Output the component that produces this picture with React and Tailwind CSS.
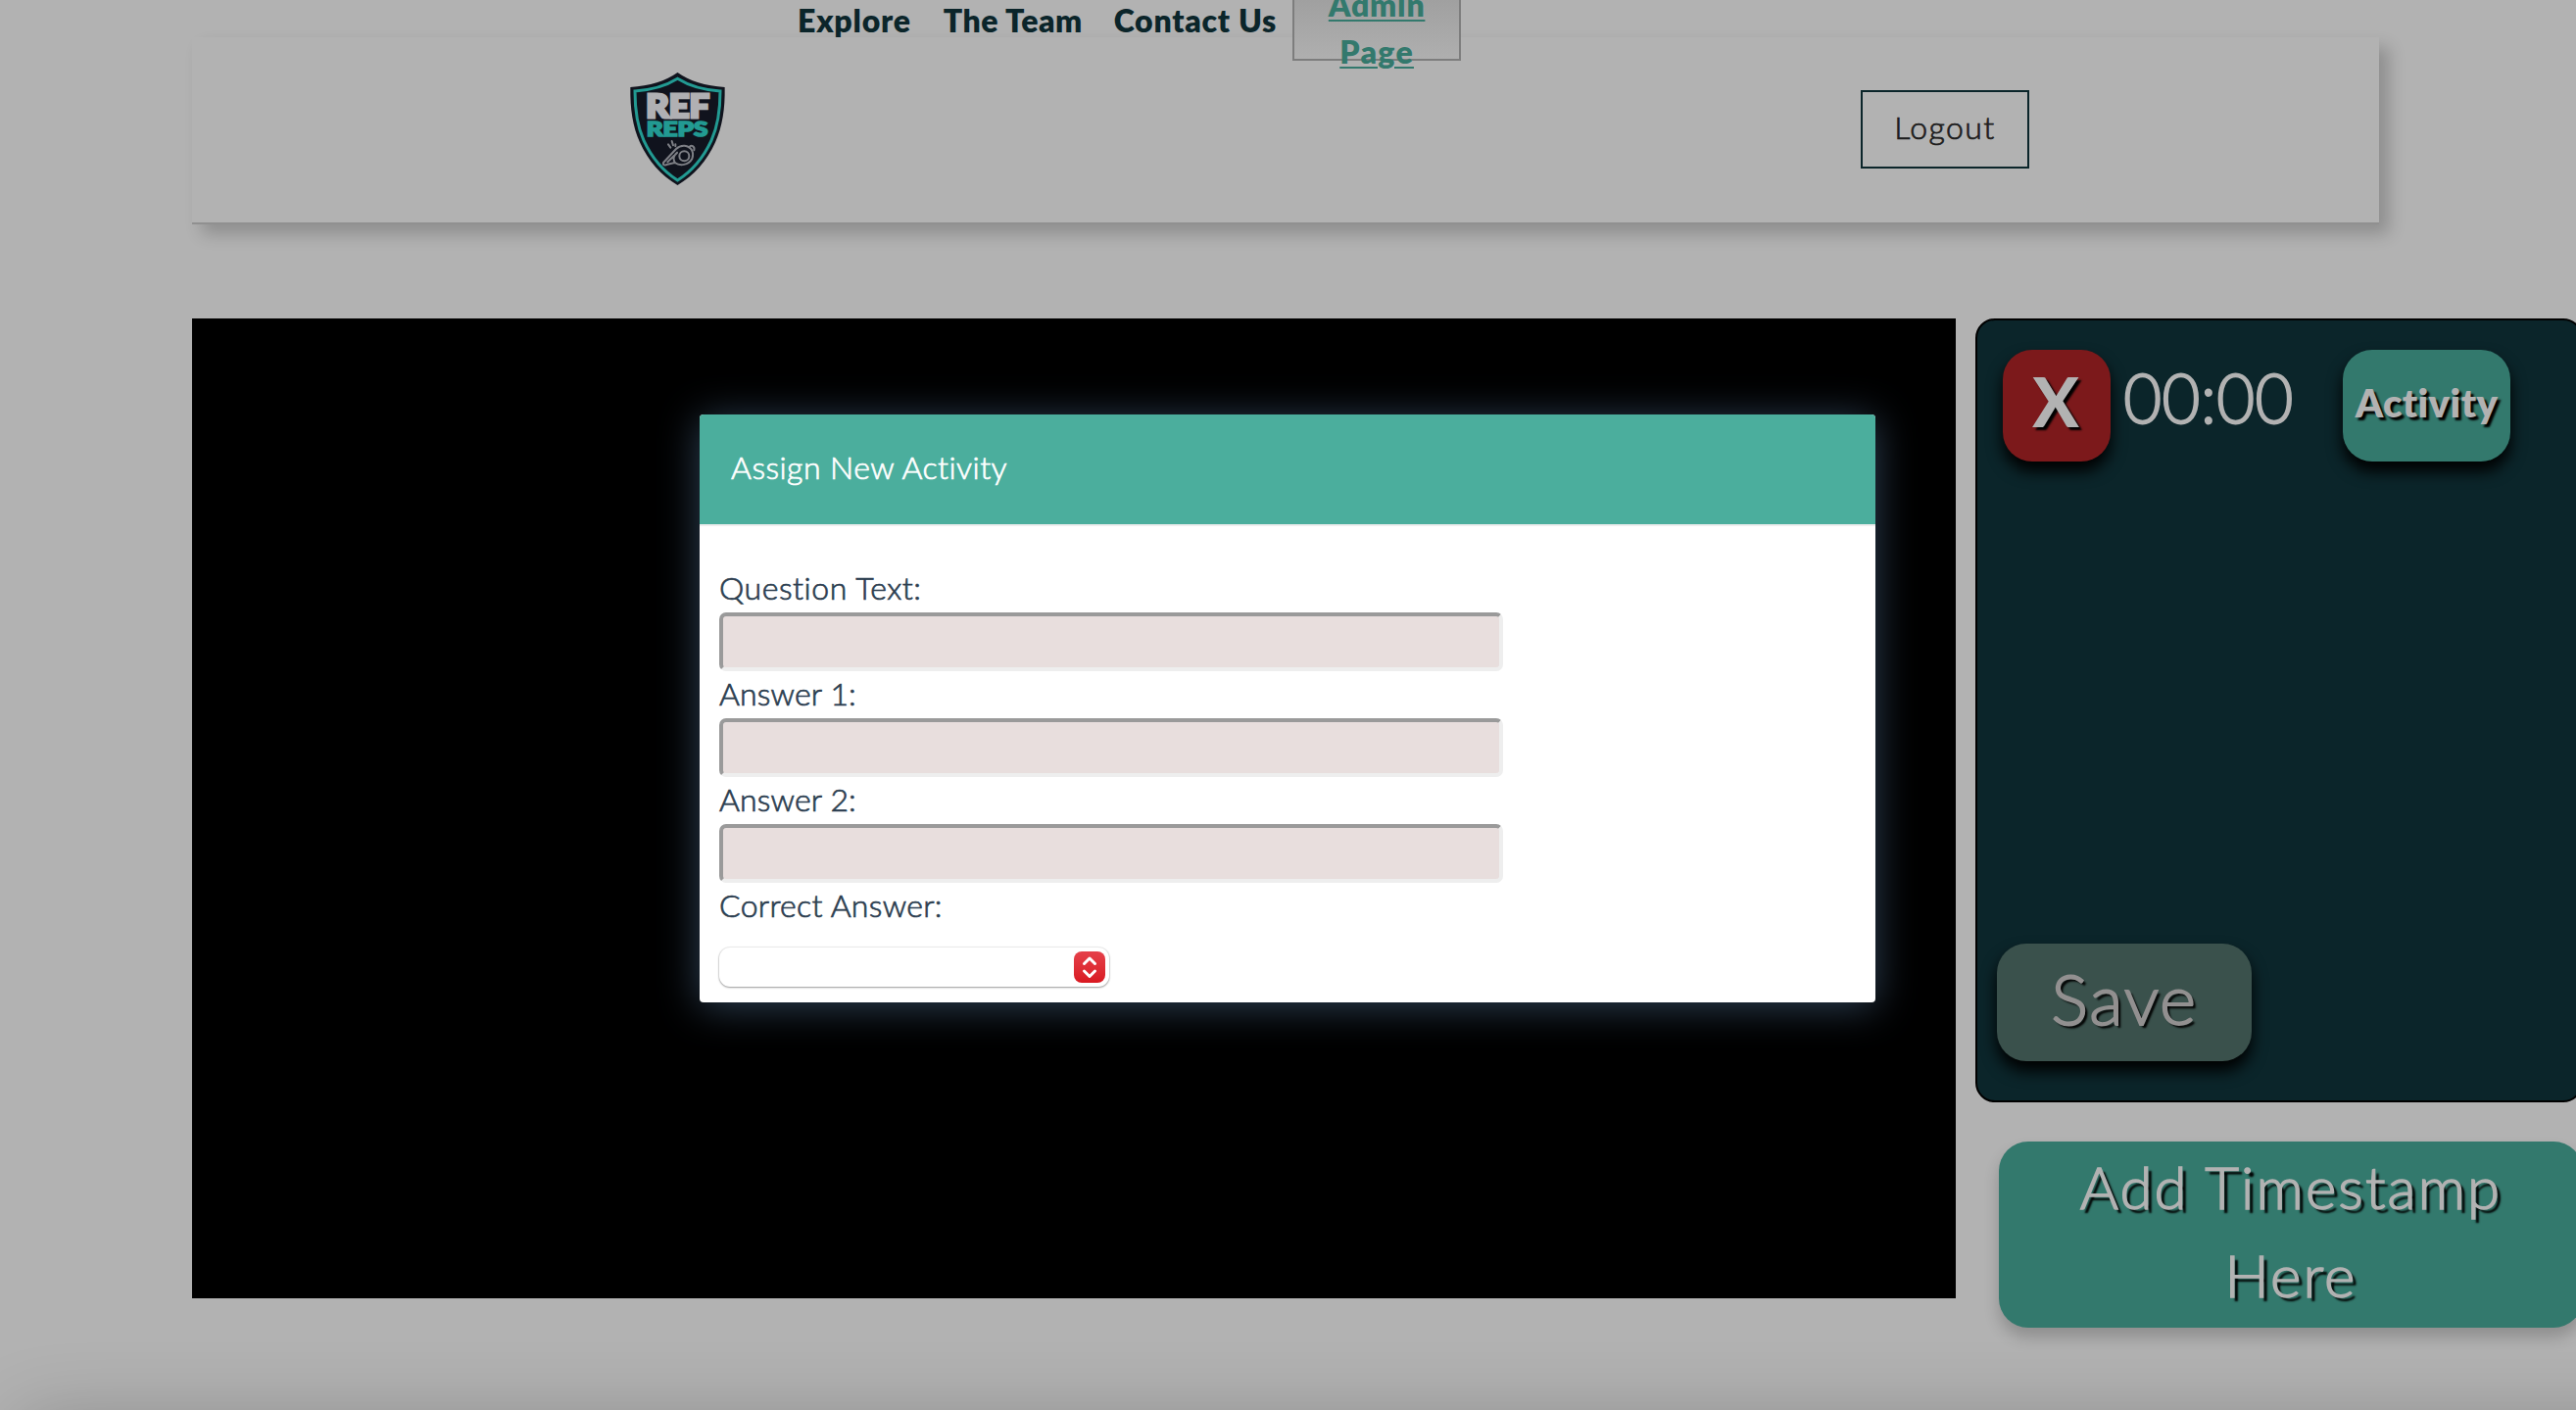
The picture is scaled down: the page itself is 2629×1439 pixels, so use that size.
function Logo() {
  return (
    <svg viewBox="60 49 309 360" className="h-[120px] w-[103px]" fontFamily="Lato, sans-serif">
      <path
        d="M214.500 58 C250 84 300 99 359 103 C360 170 352 222 330 272 C304 330 264 374 214.500 403 C165 374 125 330 99 272 C77 222 69 170 70 103 C129 99 179 84 214.500 58 Z"
        fill="#10131d"
      />
      <path
        d="M214.500 77 C250 99 296 112 345 115 C345 172 339 220 318 266 C294 318 258 360 214.500 388 C171 360 135 318 111 266 C90 220 84 172 84 115 C133 112 179 99 214.500 77 Z"
        fill="none"
        stroke="#229a92"
        strokeWidth="9"
      />
      <text x="118" y="195" fontSize="98" fontWeight="900" textLength="194" lengthAdjust="spacingAndGlyphs" fill="#b0b0b3" stroke="#b0b0b3" strokeWidth="9">
        REF
      </text>
      <text x="119" y="254" fontSize="61" fontWeight="900" textLength="188" lengthAdjust="spacingAndGlyphs" fill="#229a92" stroke="#229a92" strokeWidth="5">
        REPS
      </text>
      <g fill="none" stroke="#7d7f85" strokeWidth="6" strokeLinecap="round" strokeLinejoin="round">
        <circle cx="235" cy="314" r="15" />
        <path d="M210 292 L171 334 C169 342 176 343 184 339 L206 334 C222 345 248 342 259 322 C266 302 256 284 236 282 C224 281 216 286 210 292 Z" />
        <path d="M213 304 L184 332 M206 334 C200 322 204 310 213 303 M250 287 C256 278 268 284 265 296 M186 278 L193 288 M197 268 L201 281 M208 278 L208 284" />
      </g>
    </svg>
  );
}

function Field({ label, className }) {
  return (
    <label className="block">
      <span className={`block pb-[3px] leading-[45px] ${className}`}>{label}</span>
      <input
        type="text"
        className="block h-[60px] w-[800px] rounded-[7px] border-4 border-t-[#9a9a9a] border-r-[#eeeeee] border-b-[#eeeeee] border-l-[#9a9a9a] bg-[#e8dedd]"
      />
    </label>
  );
}

function Header() {
  return (
    <header className="mt-[38px] ml-[196px] flex h-[191px] w-[2232px] items-start border-b-2 border-[#909090] bg-[#b2b2b2] shadow-[10px_10px_16px_rgba(0,0,0,0.2)]">
      <div className="mt-[33px] ml-[444px] w-[103px]">
        <Logo />
      </div>
      <nav className="ml-[71px] flex w-[678px] items-start text-[32px] leading-[48px] font-extrabold whitespace-nowrap text-[#0b252a]">
        <a className="-mt-[41px] tracking-[0.8px]">Explore</a>
        <a className="-mt-[41px] ml-[33px] tracking-[0.5px]">The Team</a>
        <a className="-mt-[41px] ml-[32px] tracking-[0.75px]">Contact Us</a>
        <button className="-mt-[56px] ml-[16px] flex h-[80px] w-[172px] flex-col items-center border-2 border-[#7d7d7d] bg-linear-to-b from-[#9c9c9c] to-[#afafaf] font-extrabold text-[#33796d] underline decoration-2 underline-offset-[3px]">
          <span className="-mt-[3px] tracking-[0.75px]">Admin</span>
          <span className="tracking-[1.3px]">Page</span>
        </button>
      </nav>
      <button className="mt-[54px] ml-auto mr-[357px] h-[80px] w-[172px] border-2 border-[#0b252a] pb-[4px] text-[32px] font-light tracking-[1.4px] text-[#1c1c1c] [-webkit-text-stroke:0.7px]">
        Logout
      </button>
    </header>
  );
}

function SidePanel() {
  return (
    <aside className="flex w-[620px] shrink-0 flex-col text-[#b2b2b2]">
      <section className="flex h-[800px] flex-col justify-between rounded-[20px] border-2 border-black bg-[#0b252a] pt-[30px] pb-[40px] pl-[20px]">
        <div className="flex items-start pl-[6px]">
          <button className="h-[114px] w-[110px] rounded-[30px] bg-[#7c191b] pr-[2px] pb-[10px] text-[70px] leading-none font-black shadow-[0_10px_16px_#000] [text-shadow:3px_3px_2px_#000]">
            X
          </button>
          <span className="mt-px ml-[13px] w-[224px] origin-left scale-x-[0.955] text-[71px] leading-[93px] font-light [-webkit-text-stroke:1.8px]">00:00</span>
          <button className="h-[114px] w-[171px] rounded-[30px] bg-[#33796d] pb-[7px] text-[40px] font-extrabold shadow-[0_10px_16px_#000] [text-shadow:3px_3px_2px_#000]">
            <span className="tracking-[0.4px]">Activity</span>
          </button>
        </div>
        <button className="h-[120px] w-[260px] rounded-[30px] bg-[#3a514c] pb-[10px] text-[71px] leading-none font-light tracking-[1.6px] text-[#929090] shadow-[0_10px_16px_#000] [-webkit-text-stroke:1.8px] [text-shadow:3px_3px_2px_#000]">
          Save
        </button>
      </section>
      <button className="mt-[40px] ml-[24px] h-[190px] w-[596px] rounded-[30px] bg-[#33796d] pb-[8px] text-[60px] leading-[90px] font-light tracking-[2.1px] shadow-[0_10px_16px_rgba(0,0,0,0.2)] [-webkit-text-stroke:1.5px] [text-shadow:4px_4px_2px_#000]">
        Add Timestamp
        <br />
        Here
      </button>
    </aside>
  );
}

function ActivityDialog() {
  return (
    <div className="absolute top-[423px] left-[714px] h-[600px] w-[1200px] overflow-visible rounded-[4px] bg-white text-[32px] font-light text-[#2c3e50] shadow-[0_4px_40px_#2f4256] [-webkit-text-stroke:0.7px]">
      <div className="flex h-[114px] items-center rounded-t-[4px] border-b-2 border-[#eeeeee] bg-[#4bae9d] pb-[4px] pl-[32px] tracking-[0.45px] text-white">
        Assign New Activity
      </div>
      <form className="pt-[40px] pl-[20px]">
        <Field label="Question Text:" className="tracking-[0.55px]" />
        <Field label="Answer 1:" className="tracking-[0.15px]" />
        <Field label="Answer 2:" className="tracking-[0.15px]" />
        <div className="pb-[3px] leading-[45px] tracking-[0.3px]">Correct Answer:</div>
        <div className="mt-[18px] flex h-[40px] w-[398px] items-center justify-end rounded-[11px] bg-white pr-1 shadow-[0_0_1px_1px_rgba(0,0,0,0.08),0_1px_2px_rgba(0,0,0,0.35)]">
          <span className="flex h-8 w-8 items-center justify-center rounded-[8px] bg-linear-to-b from-[#e5404a] to-[#d91720]">
            <svg viewBox="0 0 32 32" className="h-8 w-8" fill="none" stroke="#fff" strokeWidth="3" strokeLinecap="round" strokeLinejoin="round">
              <path d="M10.500 12.500 L16 7 L21.500 12.500 M10.500 20 L16 25.500 L21.500 20" />
            </svg>
          </span>
        </div>
      </form>
    </div>
  );
}

export default function App() {
  return (
    <div className="relative flex h-[1439px] w-[2629px] flex-col overflow-hidden bg-[#b2b2b2] font-['Lato',sans-serif] [font-variant-ligatures:none]">
      <div className="absolute top-[1450px] left-[20px] h-[200px] w-[2900px] shadow-[0_0_80px_rgba(0,0,0,0.23)]" />
      <Header />
      <main className="mt-[96px] ml-[196px] flex items-start gap-[20px]">
        <div className="h-[1000px] w-[1800px] shrink-0 bg-black" />
        <SidePanel />
      </main>
      <ActivityDialog />
    </div>
  );
}
